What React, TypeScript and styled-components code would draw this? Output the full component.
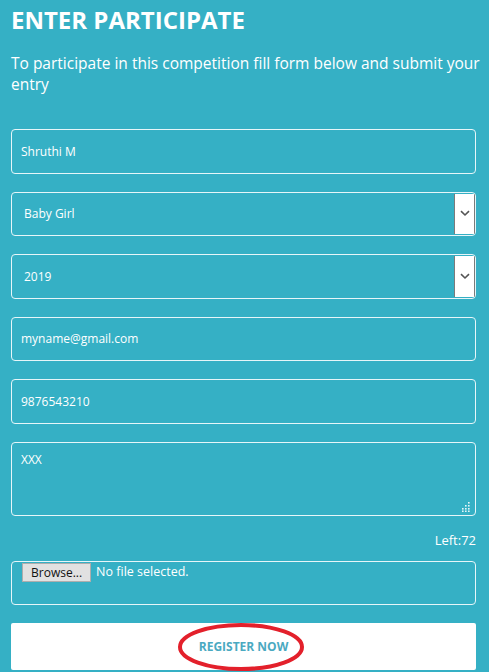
import { FunctionComponent } from 'react';
import styled, { createGlobalStyle, css } from 'styled-components';

const TEAL = '#35b0c5';

const GlobalStyle = createGlobalStyle`
  html, body {
    margin: 0;
    padding: 0;
    background: ${TEAL};
  }
  * {
    box-sizing: border-box;
  }
`;

const fieldBox = css`
  width: 100%;
  border: 1px solid #e6f6f9;
  border-radius: 4px;
  background: transparent;
  color: #ffffff;
  font-family: 'Open Sans', sans-serif;
  font-size: 12px;
`;

const Page = styled.main`
  width: 489px;
  height: 672px;
  overflow: hidden;
  padding: 4px 13px 0 11px;
  background: ${TEAL};
  font-family: 'Open Sans', sans-serif;
  color: #ffffff;
`;

const Title = styled.h1`
  margin: 0;
  font-size: 24px;
  font-weight: 700;
  line-height: 32px;
`;

const Intro = styled.p`
  margin: 17px -13px 0 0;
  font-size: 15.5px;
  line-height: 21px;
`;

const Form = styled.form`
  display: flex;
  flex-direction: column;
  gap: 18px;
  margin-top: 34px;
`;

const TextInput = styled.input`
  ${fieldBox}
  height: 44.5px;
  padding: 0 9px;
  outline: none;
`;

const SelectBox = styled.div`
  ${fieldBox}
  height: 44.5px;
  display: flex;
  align-items: stretch;
  overflow: hidden;
`;

const SelectValue = styled.select`
  flex: 1;
  appearance: none;
  border: none;
  background: transparent;
  color: #ffffff;
  font-family: 'Open Sans', sans-serif;
  font-size: 12px;
  padding: 0 12px;
  outline: none;
`;

const ArrowBox = styled.span`
  width: 21px;
  margin: 1px 0;
  background: #ffffff;
  border-left: 1px solid #7b7b7b;
  border-right: 1px solid #7b7b7b;
  display: flex;
  align-items: center;
  justify-content: center;
`;

const AreaWrap = styled.div`
  position: relative;
  height: 74px;
`;

const TextArea = styled.textarea`
  ${fieldBox}
  height: 100%;
  resize: none;
  padding: 8px 9px;
  outline: none;
`;

const Grip = styled.svg`
  position: absolute;
  right: 6px;
  bottom: 4px;
`;

const Counter = styled.div`
  margin-top: -2px;
  text-align: right;
  font-size: 13px;
  line-height: 16px;
`;

const FileBox = styled.label`
  ${fieldBox}
  height: 44px;
  margin-top: -5px;
  display: flex;
  align-items: flex-start;
  gap: 5px;
  padding: 1px 10px;
`;

const BrowseButton = styled.span`
  height: 19px;
  padding: 0 8px;
  background: #e1e1e1;
  border: 1px solid #adadad;
  color: #111;
  font-family: 'Open Sans', sans-serif;
  font-size: 12px;
  line-height: 17px;
`;

const FileName = styled.span`
  font-size: 12.5px;
  line-height: 17px;
`;

const HiddenFile = styled.input`
  display: none;
`;

const SubmitWrap = styled.div`
  position: relative;
`;

const SubmitButton = styled.button`
  width: 100%;
  height: 47px;
  border: none;
  border-radius: 2px;
  background: #ffffff;
  color: #4aa9c1;
  font-family: 'Open Sans', sans-serif;
  font-size: 12px;
  font-weight: 700;
  cursor: pointer;
`;

const Circle = styled.svg`
  position: absolute;
  left: 154px;
  top: -1px;
  pointer-events: none;
`;

const Chevron: FunctionComponent = () => (
  <svg width="10" height="7" viewBox="0 0 10 7">
    <path d="M1 1.2 L5 5 L9 1.2" fill="none" stroke="#555" strokeWidth="1.6" />
  </svg>
);

const gripDots = [
  [8, 0],
  [8, 3],
  [5, 3],
  [8, 6],
  [5, 6],
  [2, 6],
  [8, 8.5],
  [5, 8.5],
  [2, 8.5],
];

const App: FunctionComponent = (): JSX.Element => {
  return (
    <>
      <GlobalStyle />
      <Page>
        <Title>ENTER PARTICIPATE</Title>
        <Intro>
          To participate in this competition fill form below and submit your entry
        </Intro>
        <Form onSubmit={(e) => e.preventDefault()}>
          <TextInput defaultValue="Shruthi M" />
          <SelectBox>
            <SelectValue defaultValue="Baby Girl">
              <option>Baby Girl</option>
              <option>Baby Boy</option>
            </SelectValue>
            <ArrowBox>
              <Chevron />
            </ArrowBox>
          </SelectBox>
          <SelectBox>
            <SelectValue defaultValue="2019">
              <option>2019</option>
              <option>2018</option>
            </SelectValue>
            <ArrowBox>
              <Chevron />
            </ArrowBox>
          </SelectBox>
          <TextInput defaultValue="myname@gmail.com" />
          <TextInput defaultValue="9876543210" />
          <AreaWrap>
            <TextArea defaultValue="XXX" />
            <Grip width="10" height="10" viewBox="0 0 10 10">
              {gripDots.map(([x, y]) => (
                <rect key={`${x}-${y}`} x={x} y={y} width="1.6" height="1.6" fill="#e6f6f9" />
              ))}
            </Grip>
          </AreaWrap>
          <Counter>Left:72</Counter>
          <FileBox>
            <HiddenFile type="file" />
            <BrowseButton>Browse...</BrowseButton>
            <FileName>No file selected.</FileName>
          </FileBox>
          <SubmitWrap>
            <SubmitButton type="submit">REGISTER NOW</SubmitButton>
            <Circle width="140" height="52" viewBox="0 0 140 52">
              <ellipse cx="76" cy="25" rx="61" ry="22" fill="none" stroke="#e3202b" strokeWidth="4" />
            </Circle>
          </SubmitWrap>
        </Form>
      </Page>
    </>
  );
};

export default App;
